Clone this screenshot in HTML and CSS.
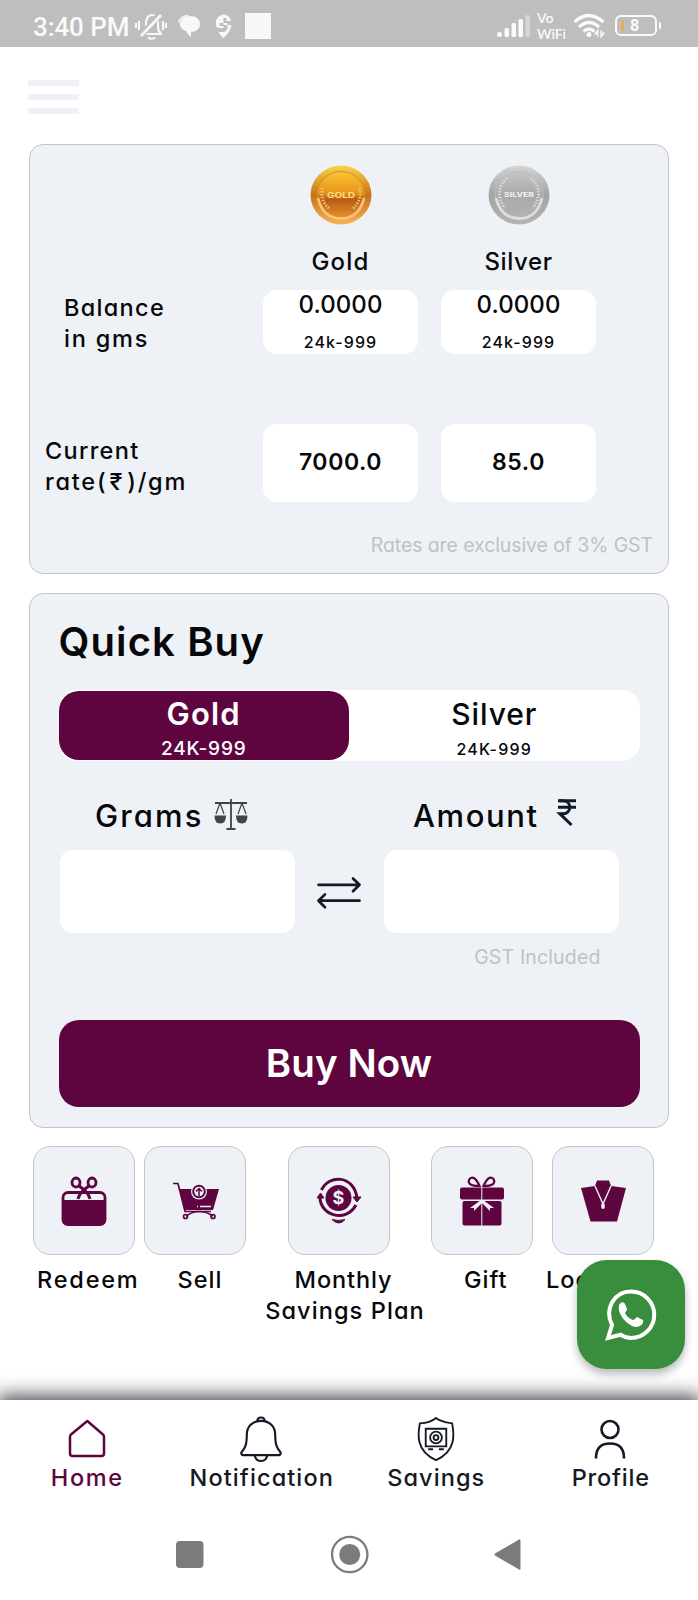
FILE: index.html
```html
<!DOCTYPE html>
<html lang="en">
<head>
<meta charset="utf-8">
<title>Gold and Silver</title>
<link rel="stylesheet" href="styles.css">
</head>
<body>
<div class="screen">
  <header class="status">
    <span class="clock">3:40 PM</span>
    <svg class="st-left" width="140" height="30" viewBox="0 0 140 30" fill="none" stroke="#f8f8f8" stroke-width="2.200">
      <path d="M7 21h21M9 20c3-2 3-4 3-9 0-5 2-9 6-9s6 4 6 9c0 5 0 7 3 9"/>
      <path d="M26 1 7 23" stroke="#bebebe" stroke-width="6"/>
      <path d="M27 2 7 23" stroke-width="2.800"/><path d="M14 24.500q4 2.500 7 0M5 8v9M2 10v5M29 8v9M32 10v5"/>
      <path d="M46 11c0-5 4-8 10-8 6 0 10 3 10 8s-4 8-9 8v5c-3-2-4-5-5-6-3-1-6-3-6-7z" fill="#f8f8f8" stroke="none"/>
      <path d="M44.500 9.500q2-7 10-7" stroke-width="1.500"/>
      <path d="M97 8a7.800 8.500 0 1 0-14.500 6l3 1h4v-2h-4v-3h8v6l-3 3h-6q2 4 5 6 7-6 8-13h-8V5h3v3z" fill="#f8f8f8" stroke="none"/>
      <path d="M111 0h26v26h-26z" fill="#f8f8f8" stroke="none"/>
    </svg>
    <span class="grow"></span>
    <svg class="signal" width="34" height="23" viewBox="0 0 34 23" fill="#fafafa">
      <rect x="0" y="17" width="5" height="5" rx="2"/><rect x="7.500" y="13" width="4.500" height="9" rx="1.500"/><rect x="14.500" y="8" width="4.500" height="14" rx="1.500"/><rect x="21.500" y="4" width="4.500" height="18" rx="1.500"/><rect x="28.500" y="0" width="4.500" height="22" rx="1.500" opacity=".4"/>
    </svg>
    <span class="vowifi"><span>Vo</span><span>WiFi</span></span>
    <svg class="wifi" width="33" height="26" viewBox="0 0 33 26" fill="none" stroke="#fafafa" stroke-width="3.200">
      <path d="M1.500 9q14-13 29 0M6 14q10-9 20 0M10.500 18.500q5.500-5 11 0"/><circle cx="16" cy="21.500" r="2.500" fill="#fafafa" stroke="none"/>
      <path d="m25 17-3 4h3zm0 0v7m3-7v7l3-4h-3z" stroke-width="1.200" fill="#fafafa"/>
    </svg>
    <span class="battery"><i></i><b>8</b></span>
  </header>

  <div class="topbar"><div class="burger"><i></i><i></i><i></i></div></div>

  <section class="card rates">
    <div class="rates-grid">
      <span></span>
      <svg class="coin" width="64" height="62" viewBox="0 0 64 62">
        <defs>
          <linearGradient id="g1" x1="0" y1="0" x2="0" y2="1"><stop offset="0" stop-color="#fbd448"/><stop offset=".5" stop-color="#c8701a"/><stop offset="1" stop-color="#f6b54e"/></linearGradient>
          <linearGradient id="g2" x1="0" y1="0" x2="0" y2="1"><stop offset="0" stop-color="#fbc431"/><stop offset=".45" stop-color="#e8951d"/><stop offset=".6" stop-color="#b95a17"/><stop offset="1" stop-color="#e6952e"/></linearGradient>
        </defs>
        <ellipse cx="32" cy="31" rx="30.500" ry="29.500" fill="url(#g1)"/>
        <ellipse cx="32" cy="31" rx="24" ry="23.500" fill="url(#g2)" stroke="#d98a25"/>
        <path d="M9 34q5 20.500 23 20.500T55 34" fill="none" stroke="#f6c27c" stroke-width="2.800"/>
        <path d="M13.500 24q-3 12 7 21M50.500 24q3 12-7 21" fill="none" stroke="#f3c06c" stroke-width="3" stroke-dasharray="1.500 1.500"/>
        <text x="32" y="33.500" class="coin-text" textLength="28" lengthAdjust="spacingAndGlyphs" fill="#ffdf80">GOLD</text>
      </svg>
      <svg class="coin" width="64" height="62" viewBox="0 0 64 62">
        <defs>
          <linearGradient id="s1" x1="0" y1="0" x2="0" y2="1"><stop offset="0" stop-color="#d4d4d4"/><stop offset=".5" stop-color="#a4a4a4"/><stop offset="1" stop-color="#b4b4b4"/></linearGradient>
          <linearGradient id="s2" x1="0" y1="0" x2="0" y2="1"><stop offset="0" stop-color="#c6c6c6"/><stop offset=".5" stop-color="#a9a9a9"/><stop offset="1" stop-color="#b3b3b3"/></linearGradient>
        </defs>
        <ellipse cx="32" cy="31" rx="30.500" ry="29.500" fill="url(#s1)"/>
        <ellipse cx="32" cy="31" rx="24" ry="23.500" fill="url(#s2)" stroke="#bcbcbc"/>
        <path d="M9 34q5 20.500 23 20.500T55 34" fill="none" stroke="#dedede" stroke-width="2.800"/>
        <path d="M20 14q-14 13-2 30M44 14q14 13 2 30" fill="none" stroke="#d9d9d9" stroke-width="3" stroke-dasharray="1.500 1.500"/>
        <text x="32" y="33" class="coin-text small" textLength="30" lengthAdjust="spacingAndGlyphs" fill="#f4f4f4">SILVER</text>
      </svg>
      <span></span>
      <div class="metal t-gold">Gold</div>
      <div class="metal t-silver">Silver</div>
      <div class="label balance">Balance<br><span class="unit">in gms</span></div>
      <div class="box"><span class="qty">0.0000</span><span class="purity">24k-999</span></div>
      <div class="box"><span class="qty">0.0000</span><span class="purity">24k-999</span></div>
      <div class="label current">Current<br><span class="unit">rate(<span class="rs">₹</span>)/gm</span></div>
      <div class="box rate">7000.0</div>
      <div class="box rate">85.0</div>
    </div>
    <div class="note">Rates are exclusive of 3% GST</div>
  </section>

  <section class="card buy">
    <h1>Quick Buy</h1>
    <div class="toggle">
      <div class="tab on"><b>Gold</b><span>24K-999</span></div>
      <div class="tab"><b>Silver</b><span>24K-999</span></div>
    </div>
    <div class="fields">
      <div class="field">
        <div class="cap grams"><span>Grams</span>
          <svg width="34" height="31" viewBox="0 0 34 31" fill="none" stroke="#3f434b" stroke-width="1.800"><path d="M17 0v29M12.500 30h9M1 4h32"/><path d="M6 4 2 15M6 4l4 11M28 4l-4 11M28 4l4 11" stroke-width="1.200"/><path d="M.5 16.500h11.500q0 8-5.750 8t-5.750-8zM22 16.500h11.500q0 8-5.750 8t-5.750-8z" fill="#3f434b" stroke="none"/></svg>
        </div>
        <div class="input"></div>
      </div>
      <svg class="swap" width="44" height="32" viewBox="0 0 44 32" fill="none" stroke="#131b26" stroke-width="2.700" stroke-linecap="round" stroke-linejoin="round"><path d="M1.500 7.800h41M36 1.500l6.500 6.300-6.500 6.400M42.500 23.700h-41M8 17.400l-6.500 6.300L8 30.200"/></svg>
      <div class="field">
        <div class="cap amount"><span>Amount</span>
          <svg width="18" height="27" viewBox="0 0 18 27" fill="none" stroke="#131b2b" stroke-width="3"><path d="M0 1.700h18M0 8.200h18"/><path d="M1 1.700h4c9 0 9 13 0 13H1.800L13.500 26"/></svg>
        </div>
        <div class="input"></div>
      </div>
    </div>
    <div class="gst">GST Included</div>
    <div class="buynow">Buy Now</div>
  </section>

  <section class="tiles">
    <div class="item" style="width:111px">
      <div class="tile"><svg width="46" height="50" viewBox="0 0 46 50" fill="none" stroke="#5e0540" stroke-width="2.800"><rect x="2" y="16.500" width="42" height="32" rx="5"/><path d="M1 24h44v20q0 5-5 5H6q-5 0-5-5z" fill="#5e0540" stroke="none"/><ellipse cx="15" cy="6.500" rx="4" ry="4.500"/><ellipse cx="31" cy="6.500" rx="4" ry="4.500"/><path d="M18 10c4 3 9 5 11 13M28 10c-4 3-9 5-11 13" stroke-width="3"/></svg></div>
      <div class="name n1">Redeem</div>
    </div>
    <div class="item" style="width:103px">
      <div class="tile"><svg class="cart" width="46" height="38" viewBox="0 0 46 38" fill="none" stroke="#5e0540" stroke-width="1.700"><path d="M0 1.500h5l7 28h26"/><path d="M6.500 7H46l-6 21H12z" fill="#5e0540" stroke="none"/><circle cx="26" cy="9.500" r="8" fill="#eef1f6" stroke="none"/><circle cx="26" cy="9.500" r="5.800" fill="#eef1f6" stroke-width="2"/><path d="M26 14V7m-3 2.500L26 6.500l3 3" stroke-width="1.500"/><path d="M27 24.500h11M24 24.500h1" stroke="#eef1f6" stroke-width="1.500"/><path d="M13 34q13-9 27 0"/><circle cx="12.500" cy="34.500" r="2"/><circle cx="40" cy="34.500" r="2"/></svg></div>
      <div class="name n2">Sell</div>
    </div>
    <div class="item" style="width:184px">
      <div class="tile"><svg width="46" height="48" viewBox="0 0 46 48" fill="none" stroke="#5e0540" stroke-width="3"><circle cx="22.500" cy="21" r="13" fill="#5e0540" stroke="none"/><path d="M5.500 13C13-3 38-2 41 21M4 20c0 19 26 26 36 8"/><path d="m1 21 3.500-5 3.500 5zM37 20h8l-4 5zM16 42.500q6 2 13 0-6 7-13 0z" fill="#5e0540" stroke-width="1"/><text x="22.500" y="27" class="dollar">$</text></svg></div>
      <div class="name n3">Monthly<br><span>Savings Plan</span></div>
    </div>
    <div class="item" style="width:103px">
      <div class="tile"><svg width="46" height="50" viewBox="0 0 46 50" fill="#5e0540"><rect x="1" y="11.500" width="44" height="12" rx="2"/><rect x="3.500" y="25" width="39" height="24.500" rx="2"/><path d="M20.500 10Q7 10 10.500 3 15-2 20.500 10zM24.500 10Q38 10 34.500 3 30-2 24.500 10z" fill="none" stroke="#5e0540" stroke-width="2.200"/><path d="M22.800 11v39" stroke="#eef1f6"/><path d="m22 24-11 8 4 0 0 3 8-8 8 8 0-3 4 0-11-8z" fill="#eef1f6"/></svg></div>
      <div class="name n4">Gift</div>
    </div>
    <div class="item last" style="width:103px">
      <div class="tile"><svg width="46" height="42" viewBox="0 0 46 42"><path d="M17 .5h12l2 5.500L46 8l-9 33.500H10.500L1 8l14-2z" fill="#5e0540"/><path d="M15 6l8 18 8-18" fill="none" stroke="#eef1f6" stroke-width="1.400"/><ellipse cx="23" cy="26" rx="1.800" ry="3" fill="#eef1f6"/></svg></div>
      <div class="name n5">Locker</div>
    </div>
  </section>

  <nav class="nav">
    <div class="tabitem home"><svg width="44" height="46" viewBox="0 0 44 46" fill="none" stroke="currentColor" stroke-width="2.500" stroke-linejoin="round"><path d="M22.300 5 6 18.500Q5 19 5 21v16.500q0 2.500 2.500 2.500h29q2.500 0 2.500-2.500V21q0-2-1-2.500z"/></svg><span class="m1">Home</span></div>
    <div class="tabitem"><svg class="bell" width="44" height="47" viewBox="0 0 44 47" fill="none" stroke="currentColor" stroke-width="2.200" stroke-linejoin="round"><path d="M18 6.500q0-5 4-5t4 5M22 5C13 5 7.500 11 7.500 19c0 11-2 14-5 17.500-1.500 2 0 3.500 1.500 3.500h36c1.500 0 3-1.500 1.500-3.500-3-3.500-5-6.500-5-17.500C36.500 11 31 5 22 5zM15.500 40q1 6 6.500 6t6.500-6"/></svg><span class="m2">Notification</span></div>
    <div class="tabitem"><svg class="shield" width="44" height="47" viewBox="0 0 44 47" fill="none" stroke="currentColor" stroke-width="1.900"><path d="M22 2Q16 7 5.500 7.500C3.500 18 1 36 22 45 43 36 40.500 18 38.500 7.500 28 7 22 2 22 2z"/><path d="M11.500 13h21v18h-21zM14 34h5M25 34h5"/><circle cx="22" cy="22" r="6"/><circle cx="22" cy="22" r="2.500"/></svg><span class="m3">Savings</span></div>
    <div class="tabitem"><svg class="person" width="44" height="46" viewBox="0 0 44 46" fill="none" stroke="currentColor" stroke-width="2.600"><circle cx="22" cy="13.500" r="8.500"/><path d="M8 42.500V42q0-14.500 14-14.500T36 42v.5"/></svg><span class="m4">Profile</span></div>
  </nav>

  <footer class="system">
    <svg width="346" height="40" viewBox="0 0 346 40" fill="#7b7b7b"><rect x="0" y="7" width="27.500" height="27" rx="4"/><circle cx="173.700" cy="20.500" r="17.700" fill="none" stroke="#7b7b7b" stroke-width="2.300"/><circle cx="173.700" cy="20.500" r="10.500"/><path d="M343 5.500q1.500-1 1.500 1v28q0 2-1.500 1L319 21.500q-1-1 0-2z"/></svg>
  </footer>

  <div class="fab"><svg width="52" height="52" viewBox="0 0 52 52" fill="none" stroke="#fff" stroke-width="4"><path d="M3 49l4-13C-1 20 9 2.500 26 2.500A23 23 0 0 1 26 49q-6 0-10.500-3.300z" stroke-linejoin="miter"/><path d="M14 16c2-4 5-3 6-1l2 5c0 2-2 3-2 4 2 4 5 6 8 7 2 0 3-3 4-3l6 3c1 4-3 7-7 7C23 37 12 26 14 16z" fill="#fff" stroke="none"/></svg></div>
</div>
</body>
</html>
```

FILE: styles.css
```css
* { box-sizing: border-box; }
body { margin: 0; background: #fff; font-family: Inter, "Open Sans", sans-serif; font-feature-settings: "cv11", "calt" 0; color: #07080b; }
.screen { position: relative; width: 698px; height: 1600px; overflow: hidden; background: #fff; display: flex; flex-direction: column; }
svg { display: block; flex: none; overflow: visible; }
.grow { flex: 1; }

.status { height: 47px; background: #bebebe; display: flex; align-items: flex-start; padding-left: 33px; flex: none; color: #fafafa; }
.clock { font: 500 26px/30px Roboto, sans-serif; margin-top: 12px; width: 101px; white-space: nowrap; letter-spacing: -.1px; }
.st-left { margin-top: 13px; }
.signal { margin-top: 15px; }
.vowifi { font: 600 14px/16px Lato, sans-serif; margin: 10px 0 0 6px; width: 30px; display: flex; flex-direction: column; letter-spacing: -.1px; }
.wifi { margin: 13px 0 0 6px; }
.battery { position: relative; width: 42px; height: 21px; border: 2px solid #fafafa; border-radius: 6px; margin: 15px 41px 0 9px; display: flex; align-items: center; }
.battery i { width: 3px; height: 11px; margin-left: 4px; background: #e0ae55; border-radius: 2px; }
.battery b { font: 700 16px/16px Roboto, sans-serif; margin-left: 6px; }
.battery::after { content: ""; position: absolute; right: -6px; top: 5px; width: 2px; height: 7px; background: #fafafa; border-radius: 1px; }

.topbar { height: 97px; padding: 33px 0 0 28px; flex: none; }
.burger { display: flex; flex-direction: column; gap: 8px; width: 51px; }
.burger i { height: 6px; background: #eef1f6; }

.card { width: 640px; margin-left: 29px; background: #eef1f6; border: 1px solid #c3c4c8; border-radius: 14px; flex: none; }
.rates { height: 430px; display: flex; flex-direction: column; }
.rates-grid { display: grid; grid-template-columns: 233px 155px 178px; grid-template-rows: 80px 65px 64px 70px 78px; }
.rates-grid > :nth-child(3n) { margin-left: 23px; }
.coin { justify-self: center; margin-top: 19px; }
.coin-text { font: 700 8px/1 Inter, sans-serif; text-anchor: middle; }
.coin-text.small { font-size: 6.500px; }
.metal { text-align: center; font-size: 24px; font-weight: 500; line-height: 30px; padding-top: 22px; }
.t-gold { letter-spacing: 1.200px; }
.t-silver { letter-spacing: .6px; }
.label { font-size: 23.500px; font-weight: 500; line-height: 31px; letter-spacing: 1.300px; white-space: nowrap; }
.unit { letter-spacing: 1.800px; }
.rs { margin: 0 3px 0 2px; }
.balance { padding: 2px 0 0 34px; }
.box { background: #fff; border-radius: 14px; display: flex; flex-direction: column; align-items: center; }
.qty { font-size: 24px; font-weight: 500; line-height: 30px; letter-spacing: .1px; }
.purity { font-size: 16px; font-weight: 500; line-height: 20px; letter-spacing: 1.100px; margin-top: 12px; }
.current, .rates-grid > .rate { grid-row: 5; }
.current { padding: 11px 0 0 15px; }
.rate { justify-content: center; font-size: 23px; font-weight: 600; letter-spacing: .6px; padding-bottom: 3px; }
.note { align-self: flex-end; margin: 30px 15px 0 0; font-size: 19.500px; line-height: 26px; color: #c0c1c5; letter-spacing: -.1px; white-space: nowrap; }

.buy { height: 535px; margin-top: 19px; padding: 0 28.500px; }
h1 { margin: 26px 0 0; font-size: 40px; line-height: 43px; height: 44px; font-weight: 600; letter-spacing: 1.100px; }
.toggle { display: flex; height: 71px; width: 581px; background: #fff; border-radius: 18px; margin-top: 26px; }
.tab { flex: 1; display: flex; flex-direction: column; align-items: center; height: 69px; margin-top: 1px; border-radius: 20px; }
.tab b { font-size: 30px; line-height: 34px; font-weight: 500; letter-spacing: .9px; margin-top: 6px; }
.tab span { font-size: 16px; line-height: 20px; font-weight: 500; letter-spacing: 1.200px; margin-top: 8px; }
.tab.on { background: #5e0540; color: #fff; }
.tab.on b { font-size: 31px; font-weight: 600; letter-spacing: 1.200px; }
.tab.on span { font-size: 19px; letter-spacing: .8px; }
.fields { display: flex; padding-left: 1.500px; margin-top: 35px; }
.field { width: 235px; }
.cap { display: flex; height: 54px; font-size: 31px; font-weight: 500; line-height: 39px; letter-spacing: 2.100px; }
.cap svg { margin-top: 3px; }
.grams { padding-left: 35px; } .grams span { width: 119px; }
.amount { padding-left: 29.500px; } .amount span { width: 145px; letter-spacing: 1.600px; }
.input { height: 83px; background: #fff; border-radius: 13px; }
.swap { margin: 81px 22.500px 0 22px; }
.gst { text-align: right; padding-right: 39px; margin-top: 11px; font-size: 19.500px; line-height: 26px; color: #c0c1c5; letter-spacing: .15px; }
.buynow { height: 87px; width: 581px; margin-top: 50px; border-radius: 20px; background: #5e0540; color: #fff; display: flex; align-items: center; justify-content: center; font-size: 38.500px; font-weight: 600; padding-bottom: 2px; letter-spacing: .1px; }

.tiles { display: flex; height: 272px; padding: 18px 0 0 33px; flex: none; }
.tile { width: 102px; height: 109px; border: 1px solid #c2c7cd; border-radius: 17px; background: #eef1f6; display: flex; align-items: center; justify-content: center; }
.item:nth-child(3) .tile { margin-left: 41px; }
.item:nth-child(4) { margin-left: -.5px; }
.cart { margin-left: 1px; }
.last { margin-left: 18.500px; }
.name { font-size: 23.500px; font-weight: 500; line-height: 31px; letter-spacing: 1px; white-space: nowrap; margin-top: 9px; }
.n1 { margin-left: 4px; letter-spacing: 1.800px; }
.n2 { margin-left: 33.500px; }
.n3 { text-align: center; margin-left: 9px; letter-spacing: .9px; }
.n3 span { letter-spacing: 1.100px; margin-left: 3px; }
.n4 { margin-left: 33.500px; }
.n5 { margin-left: -6px; }
.dollar { font: 700 18px/1 Inter, sans-serif; fill: #eef1f6; stroke: none; text-anchor: middle; }

.nav { height: 116px; display: flex; background: #fff; box-shadow: 0 -1px 18px 3px rgba(20, 24, 34, .8); flex: none; color: #141923; }
.tabitem { flex: 1; display: flex; flex-direction: column; align-items: center; padding-top: 16px; }
.tabitem svg { height: 46px; }
.bell { margin-left: -2px; }
.shield, .person { margin-left: -1px; }
.tabitem span { font-size: 23.500px; font-weight: 500; line-height: 30px; letter-spacing: 1.100px; margin-top: 1px; }
.tabitem .m1 { letter-spacing: 1.600px; }
.tabitem .m4 { letter-spacing: .8px; }
.home { color: #5e0540; }
.system { flex: 1; background: #fff; padding: 18px 0 0 175.500px; position: relative; }
.fab { position: absolute; left: 577px; top: 1260px; width: 108px; height: 109px; border-radius: 30px; background: #388e3c; box-shadow: 0 5px 9px rgba(0, 0, 0, .28); display: flex; align-items: center; justify-content: center; }
```
